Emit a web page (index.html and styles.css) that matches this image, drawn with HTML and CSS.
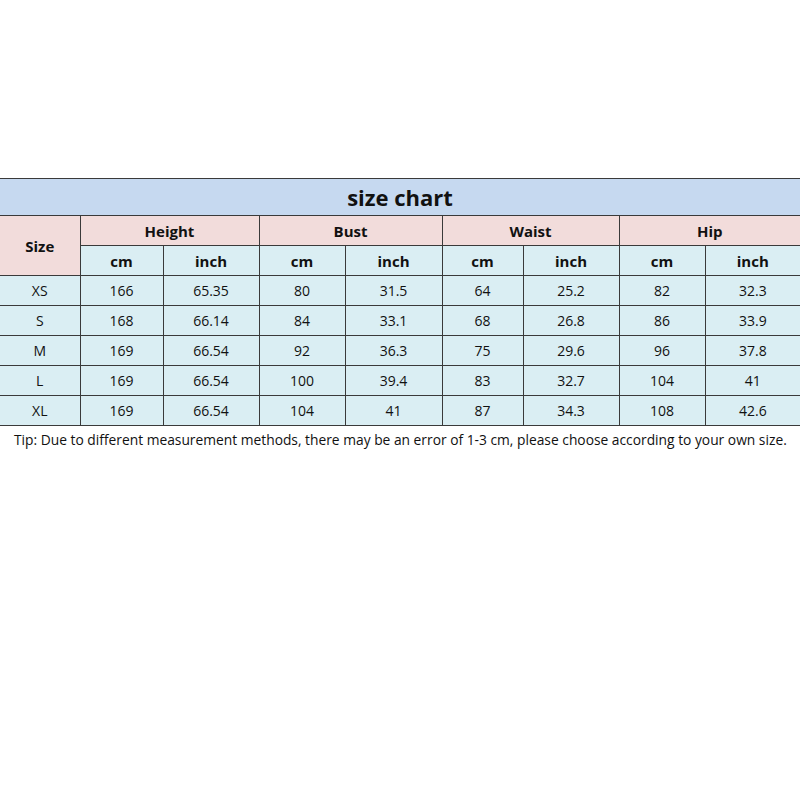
FILE: index.html
```html
<!DOCTYPE html>
<html>
<head>
<meta charset="utf-8">
<link rel="stylesheet" href="styles.css">
</head>
<body>
<div class="page">
<table class="chart">
<colgroup>
<col class="c0"><col class="c1"><col class="c2"><col class="c3"><col class="c4"><col class="c5"><col class="c6"><col class="c7"><col class="c8">
</colgroup>
<tr class="title"><th colspan="9">size chart</th></tr>
<tr class="group"><th rowspan="2" class="size">Size</th><th colspan="2">Height</th><th colspan="2">Bust</th><th colspan="2">Waist</th><th colspan="2">Hip</th></tr>
<tr class="unit"><th>cm</th><th>inch</th><th>cm</th><th>inch</th><th>cm</th><th>inch</th><th>cm</th><th>inch</th></tr>
<tr><td>XS</td><td>166</td><td>65.35</td><td>80</td><td>31.5</td><td>64</td><td>25.2</td><td>82</td><td>32.3</td></tr>
<tr><td>S</td><td>168</td><td>66.14</td><td>84</td><td>33.1</td><td>68</td><td>26.8</td><td>86</td><td>33.9</td></tr>
<tr><td>M</td><td>169</td><td>66.54</td><td>92</td><td>36.3</td><td>75</td><td>29.6</td><td>96</td><td>37.8</td></tr>
<tr><td>L</td><td>169</td><td>66.54</td><td>100</td><td>39.4</td><td>83</td><td>32.7</td><td>104</td><td>41</td></tr>
<tr><td>XL</td><td>169</td><td>66.54</td><td>104</td><td>41</td><td>87</td><td>34.3</td><td>108</td><td>42.6</td></tr>
</table>
<p class="tip">Tip: Due to different measurement methods, there may be an error of 1-3 cm, please choose according to your own size.</p>
</div>
</body>
</html>
```
FILE: styles.css
```css
html, body { margin: 0; padding: 0; background: #fff; }
.page { padding-top: 178px; font-family: "Open Sans", "Noto Sans", sans-serif; color: #111; }
.chart { width: 800px; border-collapse: collapse; table-layout: fixed; }
.c0 { width: 80px; } .c1 { width: 83px; } .c2 { width: 96px; } .c3 { width: 86px; } .c4 { width: 97px; }
.c5 { width: 81px; } .c6 { width: 96px; } .c7 { width: 86px; } .c8 { width: 95px; }
.chart th, .chart td { border: 1px solid #3a3a3a; text-align: center; padding: 0; background: #daeef3; }
.chart th { font-weight: 700; }
.chart tr { height: 30px; }
.chart td { font-size: 14px; }
.title th { background: #c6d9f0; height: 36px; font-size: 22px; border-left: none; border-right: none; }
.group th { background: #f2dcdb; font-size: 15px; }
.group th.size { background: #f2dcdb; }
.unit th { font-size: 15px; }
.chart tr > :first-child { border-left: none; }
.chart tr > :last-child { border-right: none; }
.tip { margin: 4px 0 0 14px; font-size: 13.8px; color: #111; white-space: nowrap; }
```
